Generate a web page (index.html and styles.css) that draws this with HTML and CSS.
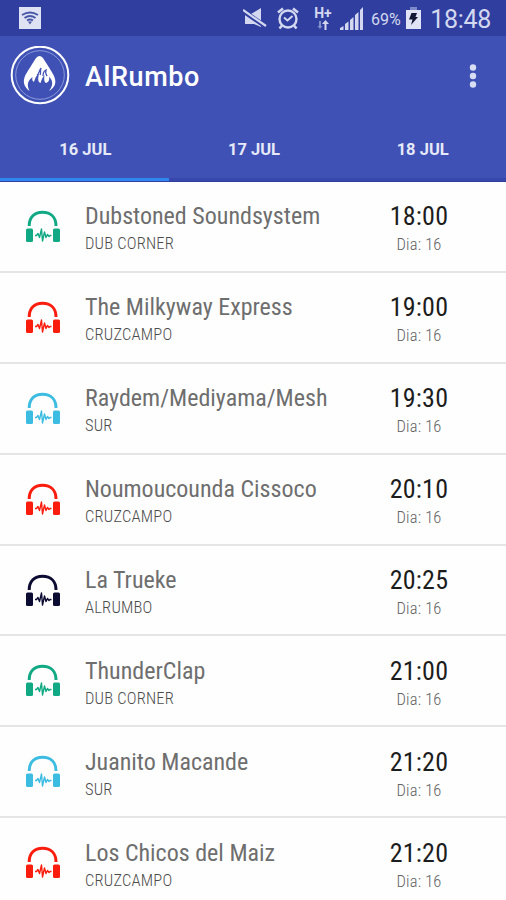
FILE: index.html
```html
<!DOCTYPE html>
<html lang="es">
<head>
    <meta charset="UTF-8">
    <meta name="viewport" content="width=device-width, initial-scale=1.0">
    <title>AlRumbo</title>
    <link rel="stylesheet" href="styles.css">
</head>
<body>
<svg class="defs">
    <symbol id="headphones" viewBox="0 0 36 34">
        <path d="M4.200 16C4.200 7 9.500 2.200 17.500 2.200S31 7 31 16" fill="none" stroke="currentColor" stroke-width="3"/>
        <rect x="1" y="18.500" width="7" height="13.500" rx="1.500" fill="currentColor"/>
        <rect x="28" y="18.500" width="7" height="13.500" rx="1.500" fill="currentColor"/>
        <path d="M10 25.500h1.500l1.500-2 1.500 4 2-8.500 1 12 2-9 1.500 5.500 1.500-3 1.500 2 1-1h1.500" fill="none" stroke="currentColor" stroke-width="1.400" stroke-linejoin="round"/>
    </symbol>
</svg>
<div class="wrap">
    <div class="status">
        <svg class="wifi" width="22" height="22" viewBox="0 0 22 22">
            <path d="M0 0h22v22H0z" fill="#dfe2f3"/>
            <path d="M3 8q8-5 16 0M5.500 11q5.500-4 11 0M8 13.500q3-2 6 0" fill="none" stroke="#4856a8" stroke-width="1.800"/>
            <path d="M9 14.500h4l-2 3z" fill="#4856a8"/>
        </svg>
        <svg class="mute" width="24" height="22" viewBox="0 0 24 22">
            <path d="M2 7h6L18 1v19l-7-3H2z" fill="#d3d8f0"/>
            <path d="M0 4l22 15" stroke="#303f9f" stroke-width="4.600"/>
            <path d="M0 3l23 16" stroke="#d3d8f0" stroke-width="2.200"/>
        </svg>
        <svg class="alarm" width="24" height="24" viewBox="0 0 24 24" fill="none" stroke="#d3d8f0">
            <circle cx="12" cy="13" r="8.500" stroke-width="2.400"/>
            <path d="M2 6.500l5-4M17 2.500l5 4M6 19.500l-2.500 3M18 19.500l2.500 3" stroke-width="2.600"/>
            <path d="M8 11.500l3.500 3 5-4.500" stroke-width="1.900"/>
        </svg>
        <div class="data">
            <span>H+</span>
            <svg width="12" height="10" viewBox="0 0 12 10">
                <path d="M2 1h2v5h1.500L3 9 .5 6H2z" fill="#8390ce"/>
                <path d="M7.500 10V4H5L8.500 0 12 4H9.500v6z" fill="#d3d8f0"/>
            </svg>
        </div>
        <svg class="signal" width="23" height="23" viewBox="0 0 23 23" fill="#d3d8f0">
            <path d="M0 23v-2l3.500-2v4zM5 23v-6l3.500-2.500V23zM10 23V13l3.500-3v13zM15 23V8l3.500-3v18zM20 23V3l3-3v23z"/>
        </svg>
        <span class="percent">69%</span>
        <svg class="battery" width="15" height="22" viewBox="0 0 15 22">
            <path d="M4 0h7v3H4z" fill="#7c88c8"/>
            <path d="M0 3h15v19H0z" fill="#e1e4f4"/>
            <path d="M5.500 6h5.500L9.500 10H12L5 18l1.500-5.500H3z" fill="#121733"/>
        </svg>
        <span class="clock">18:48</span>
    </div>
    <div class="bar">
        <svg class="logo" width="60" height="60" viewBox="0 0 60 60">
            <circle cx="30" cy="29" r="28.300" fill="none" stroke="#fff" stroke-width="2"/>
            <circle cx="30" cy="29" r="24.300" fill="none" stroke="#8c99dc" stroke-width="1"/>
            <path d="M19.500 45C14 41 12.500 36 15 30c2-4 8-13 11-18q3.500-4 7 0c3 5 8 12 10.500 17 3.500 7 2 12-4.500 16 3-4 4-7 2.500-11q-1-2-2.500-3.500c1 4-1 6-3 6.500-2-1-2-4-1.500-8-2 2-3 5-4 8-3-1-2.500-5-1.500-9-3 1-4 5-5 8-2-1-2-3-1.500-5-5 4-6 8-3 14z" fill="#fff"/>
            <path d="M27 29c2-1 2-4 4-7-1 3 0 5-1 7M33 30c0-3 1-5 3-6-1 3 0 4 1 6" fill="none" stroke="#3f51b5" stroke-width="1.300"/>
        </svg>
        <h1>AlRumbo</h1>
        <svg class="more" width="8" height="24" viewBox="0 0 8 24" fill="#d9ddf3">
            <circle cx="4" cy="3.500" r="3.200"/>
            <circle cx="4" cy="12" r="3.200"/>
            <circle cx="4" cy="20.500" r="3.200"/>
        </svg>
    </div>
    <div class="tabs">
        <div class="tab on">16 JUL</div>
        <div class="tab">17 JUL</div>
        <div class="tab">18 JUL</div>
    </div>
    <ul class="list">
        <li class="green">
            <svg class="icon"><use href="#headphones"/></svg>
            <div class="group"><h2>Dubstoned Soundsystem</h2><p>DUB CORNER</p></div>
            <div class="time"><b>18:00</b><p>Dia: 16</p></div>
        </li>
        <li class="red">
            <svg class="icon"><use href="#headphones"/></svg>
            <div class="group"><h2>The Milkyway Express</h2><p>CRUZCAMPO</p></div>
            <div class="time"><b>19:00</b><p>Dia: 16</p></div>
        </li>
        <li class="blue">
            <svg class="icon"><use href="#headphones"/></svg>
            <div class="group"><h2>Raydem/Mediyama/Mesh</h2><p>SUR</p></div>
            <div class="time"><b>19:30</b><p>Dia: 16</p></div>
        </li>
        <li class="red">
            <svg class="icon"><use href="#headphones"/></svg>
            <div class="group"><h2>Noumoucounda Cissoco</h2><p>CRUZCAMPO</p></div>
            <div class="time"><b>20:10</b><p>Dia: 16</p></div>
        </li>
        <li class="navy">
            <svg class="icon"><use href="#headphones"/></svg>
            <div class="group"><h2>La Trueke</h2><p>ALRUMBO</p></div>
            <div class="time"><b>20:25</b><p>Dia: 16</p></div>
        </li>
        <li class="green">
            <svg class="icon"><use href="#headphones"/></svg>
            <div class="group"><h2>ThunderClap</h2><p>DUB CORNER</p></div>
            <div class="time"><b>21:00</b><p>Dia: 16</p></div>
        </li>
        <li class="blue">
            <svg class="icon"><use href="#headphones"/></svg>
            <div class="group"><h2>Juanito Macande</h2><p>SUR</p></div>
            <div class="time"><b>21:20</b><p>Dia: 16</p></div>
        </li>
        <li class="red">
            <svg class="icon"><use href="#headphones"/></svg>
            <div class="group"><h2>Los Chicos del Maiz</h2><p>CRUZCAMPO</p></div>
            <div class="time"><b>21:20</b><p>Dia: 16</p></div>
        </li>
    </ul>
</div>
</body>
</html>
```

FILE: styles.css
```css
* {box-sizing: border-box; margin: 0; padding: 0;}
body {background-color: #fefefe; font-family: Roboto, sans-serif;}
svg {display: block; flex: none;}
.defs {display: none;}
.wrap {width: 506px; height: 900px; overflow: hidden;}

.status {display: flex; align-items: center; padding: 0 15px 0 19px; height: 36px; background: #303f9f; color: #d3d8f0;}
.mute {margin-left: 202px;}
.alarm {margin-left: 9px;}
.data {display: flex; flex-direction: column; align-items: center; margin-left: 13px; width: 20px; font-size: 14px; font-weight: bold; line-height: 13px;}
.signal {margin-left: 7px;}
.percent {margin-left: 8px; width: 31px; padding-top: 2px; font-size: 16px;}
.battery {margin-left: 4px;}
.clock {margin-left: auto; padding-top: 2px; font-size: 25px; letter-spacing: -0.3px;}

.bar {display: flex; align-items: center; padding: 0 29px 0 10px; height: 80px; background: #3f51b5;}
.bar h1 {margin-left: 15px; padding-top: 1px; font-size: 27px; font-weight: 500; letter-spacing: 0.6px; color: #fff;}
.more {margin-left: auto;}

.tabs {display: flex; height: 66px; background: #3f51b5; border-bottom: 1px solid #303f9f;}
.tab {flex: 1; padding: 23px 0 0 2px; border-bottom: 3px solid #3747ab; font-size: 16.5px; font-weight: 700; line-height: 22px; text-align: center; color: #e6e9f8;}
.tab.on {border-color: #2f86ee;}

.list {list-style: none;}
.list li {display: flex; height: 90.9px; border-bottom: 2px solid #e5e5e5; font-family: 'Roboto Condensed', Roboto, sans-serif; font-stretch: 75%;}
.icon {margin: 28px 0 0 25px; width: 36px; height: 34px;}
.group {margin: 19.4px 0 0 24px; width: 288px; color: #6e6e6e; white-space: nowrap;}
.group h2 {font-size: 24px; font-weight: 400; line-height: 30px;}
.group p {font-size: 16.5px; font-weight: 300; line-height: 25px; letter-spacing: 0.2px; color: #4c4c4c;}
.time {margin-top: 19.4px; width: 92px; text-align: center;}
.time b {display: block; font-size: 26px; font-weight: 400; line-height: 30px; letter-spacing: 0.2px; color: #1c1c1c;}
.time p {font-size: 16.5px; font-weight: 300; line-height: 28px; letter-spacing: 0.2px; color: #626262;}

.green {color: #10a984;}
.red {color: #fa1d0d;}
.blue {color: #3dbce2;}
.navy {color: #0c0b32;}
```
